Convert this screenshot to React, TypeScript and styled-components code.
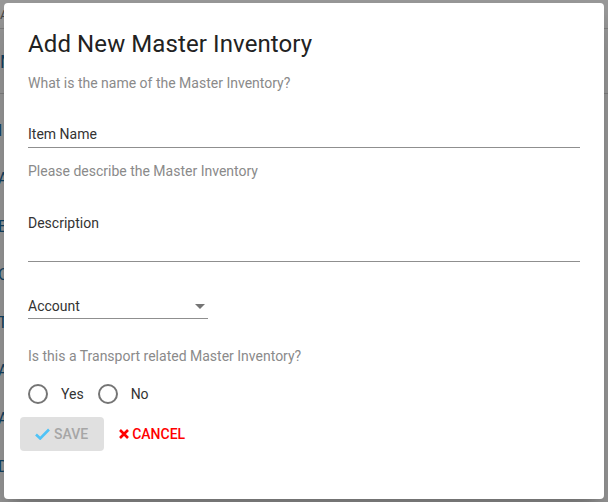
import * as React from 'react';
import styled, {createGlobalStyle} from 'styled-components';

const GlobalStyle = createGlobalStyle`
    html, body {
        margin: 0;
        padding: 0;
        background: #ffffff;
        font-family: Roboto, "Liberation Sans", Arial, sans-serif;
        overflow: hidden;
    }
`;

const Page = styled.div`
    width: 608px;
    height: 502px;
    position: relative;
    overflow: hidden;
`;

const BehindHeader = styled.div`
    height: 29px;
    border-bottom: solid 1px #d8d8d8;
    font-size: 13px;
    color: #777;
    display: flex;
    align-items: center;
    box-sizing: border-box;
`;

const BehindTab = styled.div`
    height: 65px;
    border-bottom: solid 1px #d8d8d8;
    color: #1d6fa5;
    font-size: 18px;
    display: flex;
    align-items: center;
    box-sizing: border-box;
`;

const BehindList = styled.ul`
    list-style: none;
    margin: 0;
    padding: 27px 0 0 0;
    display: flex;
    flex-direction: column;
    gap: 28px;
`;

const BehindItem = styled.li`
    color: #1d6fa5;
    font-size: 16px;
    line-height: 20px;
    margin-left: -2px;
`;

const Backdrop = styled.div`
    position: absolute;
    inset: 0;
    background: rgba(0, 0, 0, 0.4);
    display: flex;
    align-items: flex-start;
    justify-content: flex-start;
    padding: 3px 0 0 4px;
`;

const Dialog = styled.div`
    width: 600px;
    height: 496px;
    background: #fff;
    border-radius: 4px;
    box-shadow: 0 11px 15px -7px rgba(0,0,0,0.2), 0 24px 38px 3px rgba(0,0,0,0.14);
    box-sizing: border-box;
    padding: 25px 24px 0 24px;
    display: flex;
    flex-direction: column;
`;

const Title = styled.h2`
    margin: 0;
    font-size: 24px;
    line-height: 32px;
    font-weight: 400;
    letter-spacing: 0.1px;
    color: #222;
`;

const Hint = styled.p`
    margin: ${({top}: {top: number}) => top}px 0 0 0;
    font-size: 14px;
    line-height: 20px;
    color: #8a8a8a;
`;

const Field = styled.div<{top: number; bottom: number; width?: number}>`
    margin-top: ${({top}) => top}px;
    padding-bottom: ${({bottom}) => bottom}px;
    width: ${({width}) => (width ? `${width}px` : '100%')};
    border-bottom: solid 1px #8f8f8f;
    display: flex;
    align-items: center;
    justify-content: space-between;
    font-size: 14px;
    line-height: 20px;
    color: #333;
`;

const Arrow = styled.span`
    width: 0;
    height: 0;
    border-left: 5px solid transparent;
    border-right: 5px solid transparent;
    border-top: 5px solid #757575;
    margin-right: 3px;
`;

const RadioRow = styled.div`
    margin-top: 18px;
    display: flex;
    align-items: center;
    height: 20px;
`;

const RadioOption = styled.label`
    display: flex;
    align-items: center;
    font-size: 14px;
    color: #333;
    margin-right: 14px;
`;

const Circle = styled.span`
    width: 20px;
    height: 20px;
    box-sizing: border-box;
    border: solid 2px #757575;
    border-radius: 50%;
    margin-right: 13px;
`;

const Actions = styled.div`
    margin: 13px 0 0 -8px;
    display: flex;
    align-items: center;
    gap: 15px;
`;

const Button = styled.button<{variant: 'disabled' | 'danger'}>`
    font-family: Roboto, "Liberation Sans", Arial, sans-serif;
    font-size: 14px;
    font-weight: 500;
    height: 34px;
    border: none;
    border-radius: 4px;
    display: flex;
    align-items: center;
    gap: ${({variant}) => (variant === 'disabled' ? 4 : 3)}px;
    background: ${({variant}) => (variant === 'disabled' ? '#e0e0e0' : 'transparent')};
    color: ${({variant}) => (variant === 'disabled' ? '#a6a6a6' : '#ff0000')};
    padding: ${({variant}) => (variant === 'disabled' ? '0 16px 0 15px' : '0')};
`;

const CheckIcon = () => (
    <svg width="15" height="12" viewBox="0 0 15 12">
        <path d="M1 6.5 L5.2 10.5 L14 1.5" fill="none" stroke="#4fc3f7" strokeWidth="2.6" />
    </svg>
);

const CrossIcon = () => (
    <svg width="10" height="10" viewBox="0 0 10 10">
        <path d="M1 1 L9 9 M9 1 L1 9" fill="none" stroke="#ff0000" strokeWidth="2.6" />
    </svg>
);

const behindLetters = ['I', 'A', 'E', 'C', 'T', 'A', 'A', 'D'];

const App: React.FC = () => {
    return (
        <Page>
            <GlobalStyle />
            <BehindHeader>A</BehindHeader>
            <BehindTab>M</BehindTab>
            <BehindList>
                {behindLetters.map((l, i) => (
                    <BehindItem key={i}>{l}</BehindItem>
                ))}
            </BehindList>
            <Backdrop>
                <Dialog>
                    <Title>Add New Master Inventory</Title>
                    <Hint top={13}>What is the name of the Master Inventory?</Hint>
                    <Field top={31} bottom={3}>Item Name</Field>
                    <Hint top={13}>Please describe the Master Inventory</Hint>
                    <Field top={32} bottom={28}>Description</Field>
                    <Field top={34} bottom={2} width={180}>
                        Account
                        <Arrow />
                    </Field>
                    <Hint top={27}>Is this a Transport related Master Inventory?</Hint>
                    <RadioRow>
                        <RadioOption>
                            <Circle />
                            Yes
                        </RadioOption>
                        <RadioOption>
                            <Circle />
                            No
                        </RadioOption>
                    </RadioRow>
                    <Actions>
                        <Button variant="disabled" disabled>
                            <CheckIcon />
                            SAVE
                        </Button>
                        <Button variant="danger">
                            <CrossIcon />
                            CANCEL
                        </Button>
                    </Actions>
                </Dialog>
            </Backdrop>
        </Page>
    );
};

export default App;
